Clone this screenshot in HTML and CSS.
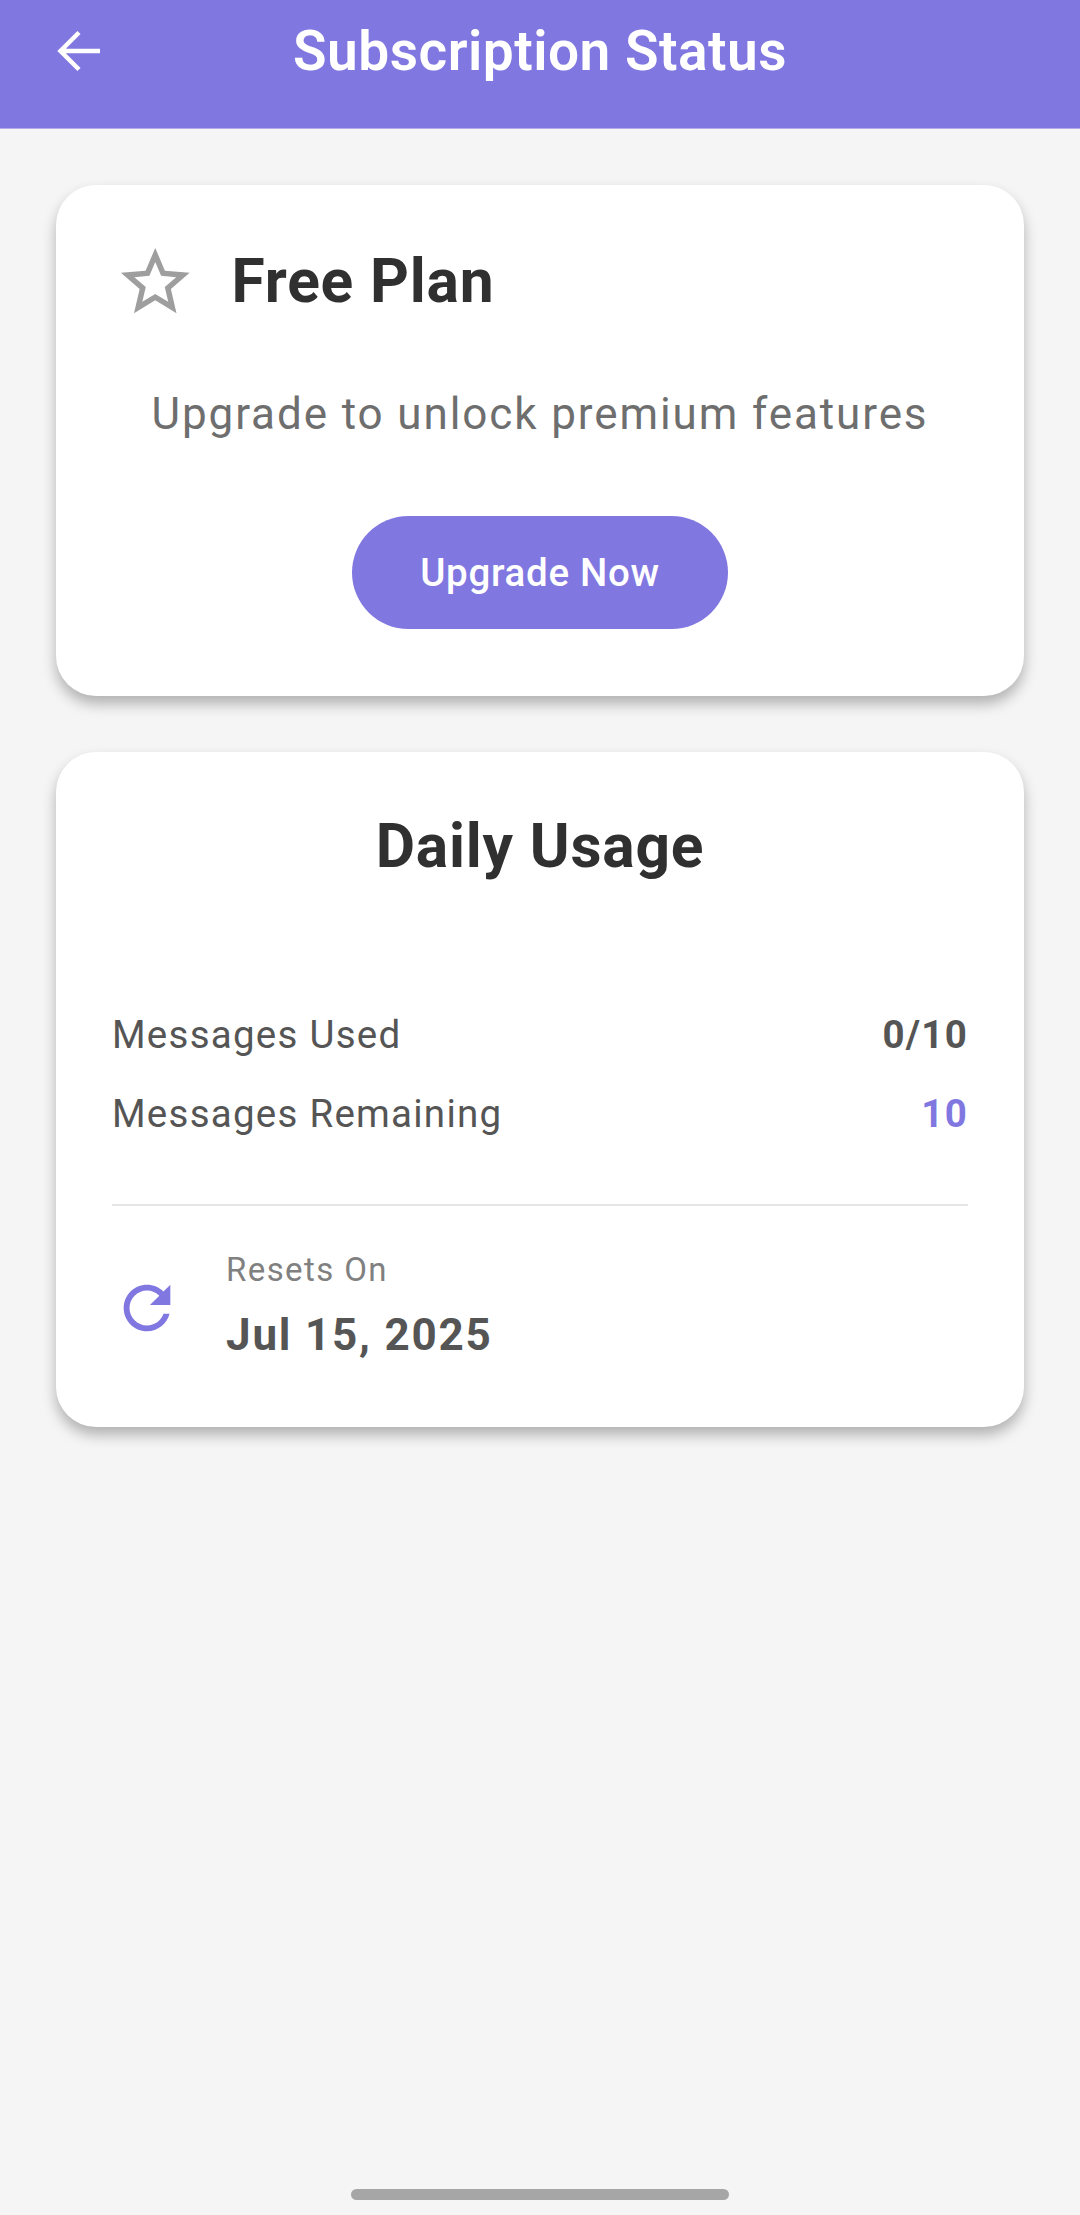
FILE: index.html
```html
<!DOCTYPE html>
<html>
<head>
  <meta charset="UTF-8">
  <link rel="stylesheet" href="styles.css">
</head>
<body>
  <header class="app-bar">
    <svg class="back-icon" viewBox="0 0 48 48"><path d="M46 24H6.500M25 5.500L6.500 24 25 42.500" fill="none" stroke="#fff" stroke-width="4.500"/></svg>
    <h1>Subscription Status</h1>
  </header>

  <main class="content">
    <section class="card plan-card">
      <div class="plan-head">
        <svg class="star-icon" viewBox="0 0 24 24"><path d="M22 9.240l-7.190-.620L12 2 9.190 8.630 2 9.240l5.460 4.730L5.820 21 12 17.270 18.180 21l-1.630-7.030L22 9.240zM12 15.400l-3.760 2.270 1-4.280-3.320-2.880 4.380-.380L12 6.100l1.710 4.040 4.380.380-3.320 2.880 1 4.280L12 15.400z" fill="#9e9e9e"/></svg>
        <h2>Free Plan</h2>
      </div>
      <p class="plan-note">Upgrade to unlock premium features</p>
      <button class="upgrade-btn">Upgrade Now</button>
    </section>

    <section class="card usage-card">
      <h2 class="usage-title">Daily Usage</h2>
      <div class="usage-rows">
        <div class="usage-row">
          <span>Messages Used</span>
          <strong>0/10</strong>
        </div>
        <div class="usage-row">
          <span>Messages Remaining</span>
          <strong class="accent">10</strong>
        </div>
      </div>
      <div class="reset-row">
        <svg class="refresh-icon" viewBox="0 0 24 24"><path d="M17.650 6.350C16.200 4.900 14.210 4 12 4c-4.420 0-7.990 3.580-7.990 8s3.570 8 7.990 8c3.730 0 6.840-2.550 7.730-6h-2.080c-.820 2.330-3.040 4-5.650 4-3.310 0-6-2.690-6-6s2.690-6 6-6c1.660 0 3.140.690 4.220 1.780L13 11h7V4l-2.350 2.350z" fill="#8177e0"/></svg>
        <div class="reset-text">
          <span class="reset-label">Resets On</span>
          <span class="reset-date">Jul 15, 2025</span>
        </div>
      </div>
    </section>
  </main>

  <div class="home-bar"></div>
</body>
</html>
```

FILE: styles.css
```css
* {
  margin: 0;
  padding: 0;
  box-sizing: border-box;
}

:root {
  --purple: #8177e0;
  --dark: #303030;
  --grey: #555555;
}

body {
  position: relative;
  height: 2215px;
  overflow: hidden;
  background: #f5f5f5;
  font-family: Roboto, "Liberation Sans", sans-serif;
}

/* header */
.app-bar {
  position: relative;
  height: 129px;
  padding-bottom: 26px;
  display: flex;
  align-items: center;
  justify-content: center;
  background: var(--purple);
  border-bottom: 1px solid #b3adec;
}

.app-bar h1 {
  color: #ffffff;
  font-size: 55px;
  font-weight: 600;
  letter-spacing: 0.5px;
}

.back-icon {
  position: absolute;
  left: 54px;
  top: 27px;
  width: 48px;
  height: 48px;
}

/* cards */
.content {
  display: flex;
  flex-direction: column;
  gap: 56px;
  padding: 56px 56px 0;
}

.card {
  background: #ffffff;
  border-radius: 40px;
  box-shadow: 0 8px 14px rgba(0, 0, 0, 0.28);
}

.plan-card {
  padding: 56px 56px 67px;
  display: flex;
  flex-direction: column;
  align-items: center;
}

.plan-head {
  align-self: stretch;
  display: flex;
  align-items: center;
  gap: 35px;
  padding-left: 2px;
}

.star-icon {
  width: 82.500px;
  height: 82.500px;
  flex-shrink: 0;
}

h2 {
  color: var(--dark);
  font-size: 60.500px;
  font-weight: 700;
  letter-spacing: 0.8px;
}

.plan-head h2 {
  margin-top: -2px;
}

.plan-note {
  margin-top: 64px;
  color: #6e6e6e;
  font-size: 44px;
  letter-spacing: 1.900px;
}

.upgrade-btn {
  margin-top: 76px;
  width: 376px;
  height: 113px;
  border: none;
  border-radius: 57px;
  background: var(--purple);
  color: #ffffff;
  font-family: inherit;
  font-size: 38.500px;
  font-weight: 500;
  letter-spacing: 0.7px;
}

.usage-card {
  padding: 59px 56px 66px;
}

.usage-title {
  text-align: center;
}

.usage-rows {
  margin-top: 130px;
  display: flex;
  flex-direction: column;
  gap: 34px;
}

.usage-row {
  display: flex;
  justify-content: space-between;
  align-items: center;
  color: var(--grey);
  font-size: 38.500px;
  letter-spacing: 1.250px;
}

.usage-row strong {
  font-weight: 700;
}

.usage-row .accent {
  color: var(--purple);
}

.reset-row {
  margin-top: 68px;
  padding-top: 44px;
  border-top: 2px solid #e6e6e6;
  display: flex;
  align-items: center;
  gap: 44px;
}

.refresh-icon {
  width: 70px;
  height: 70px;
  flex-shrink: 0;
  margin-top: 6px;
}

.reset-text {
  display: flex;
  flex-direction: column;
  gap: 20px;
}

.reset-label {
  color: #808080;
  font-size: 33px;
  letter-spacing: 1.400px;
}

.reset-date {
  color: var(--grey);
  font-size: 44px;
  font-weight: 700;
  letter-spacing: 1.800px;
}

/* gesture bar */
.home-bar {
  position: absolute;
  left: 351px;
  top: 2189px;
  width: 378px;
  height: 11px;
  border-radius: 6px;
  background: #a6a6a6;
}
```
